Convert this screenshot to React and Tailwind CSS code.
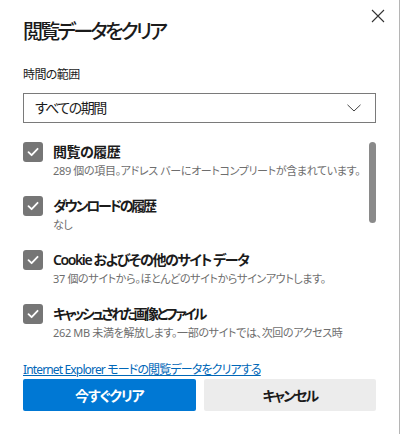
import React from 'react';

const items = [
  {
    title: '閲覧の履歴',
    desc: '289 個の項目。アドレス バーにオートコンプリートが含まれています。',
    tt: 'tracking-[-0.5px]',
  },
  { title: 'ダウンロードの履歴', desc: 'なし', tt: 'tracking-[-2.2px]' },
  {
    title: 'Cookie およびその他のサイト データ',
    desc: '37 個のサイトから。ほとんどのサイトからサインアウトします。',
    tt: 'tracking-[-1.4px]',
  },
  {
    title: 'キャッシュされた画像とファイル',
    desc: '262 MB 未満を解放します。一部のサイトでは、次回のアクセス時',
    tt: 'tracking-[-2.6px]',
  },
  { title: 'パスワード', desc: 'なし', tt: 'tracking-[-1px]' },
];

const CheckBox = () => (
  <div className="w-5 h-5 shrink-0 rounded-[3px] bg-[#767676] flex items-center justify-center">
    <svg width="14" height="14" viewBox="0 0 14 14" fill="none">
      <path d="M2.5 7.2 L5.6 10.2 L11.6 3.8" stroke="white" strokeWidth="1.8" strokeLinecap="round" strokeLinejoin="round" />
    </svg>
  </div>
);

export default function App() {
  return (
    <div
      className="relative w-[400px] h-[434px] bg-white border-r border-[#b5b5b5] text-[#1b1b1b] [font-feature-settings:'palt']"
      style={{ fontFamily: '"Noto Sans", "Noto Sans CJK JP", sans-serif' }}
    >
      {/* Close */}
      <button className="absolute top-[9px] right-[14px] w-[14px] h-[14px] flex items-center justify-center">
        <svg width="14" height="14" viewBox="0 0 14 14" fill="none">
          <path d="M1 1 L13 13 M13 1 L1 13" stroke="#333" strokeWidth="1.1" />
        </svg>
      </button>

      <div className="px-[23px] pt-[18px]">
        <h1 className="text-[20px] leading-[28px] font-medium tracking-[-2.8px]">閲覧データをクリア</h1>

        <div className="mt-[20px] text-[12px] leading-[18px] tracking-[-0.6px]">時間の範囲</div>

        <div className="mt-[9px] h-[30px] border border-[#7a7a7a] flex items-center justify-between pl-[11px] pr-[14px]">
          <span className="text-[14px] leading-[20px] tracking-[-1.5px]">すべての期間</span>
          <svg width="14" height="8" viewBox="0 0 14 8" fill="none">
            <path d="M0.5 0.8 L7 7 L13.5 0.8" stroke="#444" strokeWidth="1" />
          </svg>
        </div>

        {/* Scroll list */}
        <div className="mt-[19px] flex">
          <div className="flex-1 h-[203px] overflow-hidden flex flex-col gap-[16px]">
            {items.map((it) => (
              <div key={it.title} className="flex gap-[10px]">
                <CheckBox />
                <div className="flex flex-col">
                  <div className={`text-[14px] leading-[20px] font-semibold ${it.tt}`}>{it.title}</div>
                  <div className="text-[11px] leading-[18px] text-[#6e6e6e] whitespace-nowrap tracking-[-0.35px]">{it.desc}</div>
                </div>
              </div>
            ))}
          </div>
          <div className="w-[7px] shrink-0">
            <div className="h-[81px] rounded-full bg-[#8a8a8a]" />
          </div>
        </div>

        <div className="mt-[17px] text-[12px] leading-[16px] tracking-[-0.85px]">
          <a className="text-[#0067b8] underline underline-offset-[1px]">Internet Explorer モードの閲覧データをクリアする</a>
        </div>

        <div className="mt-[1px] flex gap-[8px]">
          <button className="flex-1 h-[32px] rounded-[2px] bg-[#0078d4] text-white text-[14px] font-semibold tracking-[-1.2px]">今すぐクリア</button>
          <button className="flex-1 h-[32px] rounded-[2px] bg-[#ececec] text-[#1b1b1b] text-[14px] font-semibold tracking-[-2px]">キャンセル</button>
        </div>
      </div>
    </div>
  );
}
